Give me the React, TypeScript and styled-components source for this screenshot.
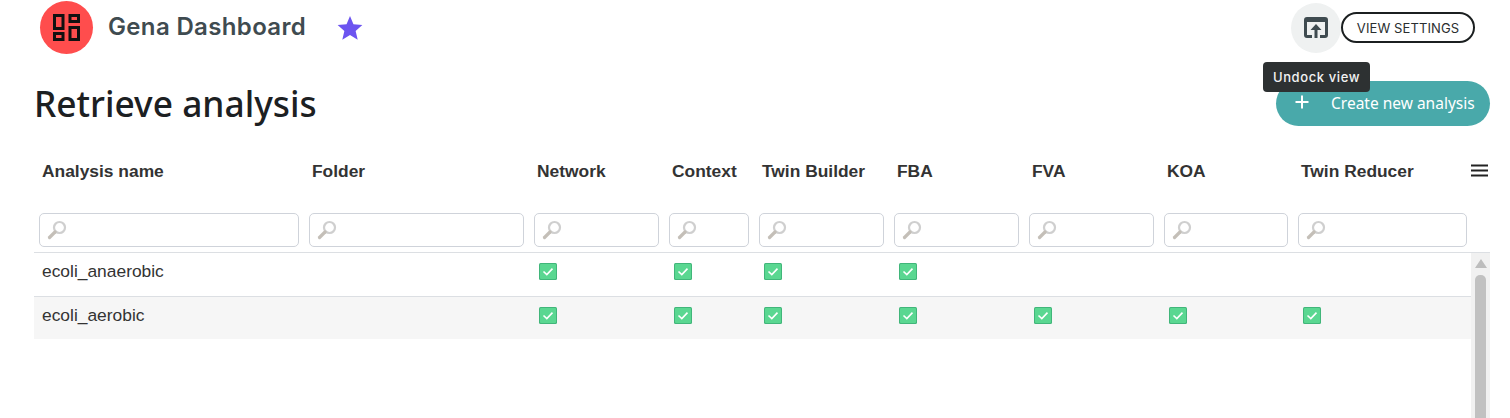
import React from "react";
import styled, { createGlobalStyle } from "styled-components";

const GlobalStyle = createGlobalStyle`
  html, body {
    margin: 0;
    padding: 0;
    height: 418px;
    overflow: hidden;
    background: #ffffff;
  }
`;

const COLUMNS = [
  { name: "Analysis name", width: 270 },
  { name: "Folder", width: 225 },
  { name: "Network", width: 135 },
  { name: "Context", width: 90 },
  { name: "Twin Builder", width: 135 },
  { name: "FBA", width: 135 },
  { name: "FVA", width: 135 },
  { name: "KOA", width: 134 },
  { name: "Twin Reducer", width: 179 },
];

const ROWS = [
  { name: "ecoli_anaerobic", checks: [2, 3, 4, 5] },
  { name: "ecoli_aerobic", checks: [2, 3, 4, 5, 6, 7, 8] },
];

const gridColumns = COLUMNS.map((c) => `${c.width}px`).join(" ");

const Page = styled.div`
  width: 1456px;
  padding-left: 34px;
  font-family: "Liberation Sans", Arial, sans-serif;
`;

const TopBar = styled.header`
  display: flex;
  align-items: center;
  height: 53px;
  padding: 1px 15px 0 6px;
`;

const Logo = styled.div`
  display: flex;
  align-items: center;
  justify-content: center;
  width: 53px;
  height: 53px;
  border-radius: 50%;
  background: #ff4d4d;
`;

const AppTitle = styled.h2`
  margin: -2px 0 0 15px;
  font-family: Inter, sans-serif;
  font-size: 24px;
  font-weight: 600;
  letter-spacing: 0.35px;
  color: #3f4b50;
`;

const Star = styled.svg`
  margin-left: 31px;
  width: 26px;
  height: 26px;
  fill: #6c54f0;
`;

const Actions = styled.div`
  position: relative;
  display: flex;
  align-items: center;
  margin-left: auto;
`;

const UndockButton = styled.button`
  display: flex;
  align-items: center;
  justify-content: center;
  width: 50px;
  height: 50px;
  padding: 0;
  border: none;
  border-radius: 50%;
  background: #eff1f1;
`;

const Tooltip = styled.div`
  position: absolute;
  top: 59px;
  left: -28px;
  z-index: 2;
  display: flex;
  align-items: center;
  justify-content: center;
  width: 107px;
  height: 30px;
  border-radius: 4px;
  background: #2d3132;
  color: #f2f2f2;
  font-family: Inter, sans-serif;
  font-size: 13px;
  font-weight: 500;
  letter-spacing: 0.6px;
  white-space: nowrap;
`;

const SettingsButton = styled.button`
  box-sizing: border-box;
  width: 134px;
  height: 31px;
  padding: 0;
  border: 2px solid #1b1f20;
  border-radius: 16px;
  background: #ffffff;
  color: #2a2e30;
  font-family: Inter, sans-serif;
  font-size: 13px;
  letter-spacing: 0.1px;
`;

const HeadingRow = styled.div`
  display: flex;
  align-items: center;
  justify-content: space-between;
  margin-top: 27px;
`;

const Heading = styled.h1`
  margin: 0;
  font-family: "Noto Sans", sans-serif;
  font-size: 35.3px;
  font-weight: 500;
  line-height: 45px;
  color: #1c2022;
`;

const CreateButton = styled.button`
  display: flex;
  align-items: center;
  box-sizing: border-box;
  width: 214px;
  height: 45px;
  padding: 0 0 2px 18px;
  border: none;
  border-radius: 23px;
  background: #49a9aa;
  color: #ffffff;
  font-family: "Noto Sans", sans-serif;
  font-size: 15.5px;
  font-weight: 400;
`;

const PlusIcon = styled.svg`
  width: 16px;
  height: 16px;
  margin-right: 21px;
  margin-top: -2px;
`;

const HeaderRow = styled.div`
  position: relative;
  display: grid;
  grid-template-columns: ${gridColumns};
  align-items: center;
  height: 42px;
  margin-top: 24px;
`;

const HeaderCell = styled.div`
  padding-left: 8px;
  font-size: 17.4px;
  font-weight: 700;
  color: #333333;
  white-space: nowrap;
`;

const MenuIcon = styled.svg`
  position: absolute;
  top: 14px;
  left: 1437px;
  width: 17px;
  height: 13px;
`;

const FilterRow = styled.div`
  display: grid;
  grid-template-columns: ${gridColumns};
  padding-top: 21px;
  height: 39px;
  border-bottom: 1px solid #dcdfe3;
  width: 1456px;
`;

const FilterCell = styled.div`
  padding: 0 5px;
  min-width: 0;
`;

const FilterBox = styled.div`
  box-sizing: border-box;
  display: flex;
  align-items: center;
  height: 34px;
  padding-left: 7px;
  border: 1px solid #cfd3da;
  border-radius: 5px;
  background: #ffffff;
`;

const Body = styled.div`
  display: flex;
  height: 166px;
`;

const Rows = styled.div`
  width: 1437px;
`;

const Row = styled.div<{ $striped: boolean }>`
  display: grid;
  grid-template-columns: ${gridColumns};
  align-items: center;
  box-sizing: border-box;
  height: ${({ $striped }) => ($striped ? "42px" : "44px")};
  padding-bottom: ${({ $striped }) => ($striped ? "5px" : "6px")};
  background: ${({ $striped }) => ($striped ? "#f6f6f6" : "#ffffff")};
  border-bottom: ${({ $striped }) => ($striped ? "none" : "1px solid #dcdfe3")};
`;

const Cell = styled.div`
  padding-left: 8px;
  font-size: 17.4px;
  color: #333333;
  white-space: nowrap;
`;

const CheckCell = styled(Cell)`
  display: flex;
  padding-left: 10px;
`;

const Scrollbar = styled.div`
  display: flex;
  flex-direction: column;
  align-items: center;
  width: 19px;
  background: #f1f1f1;
`;

const ScrollArrow = styled.div`
  width: 0;
  height: 0;
  margin-top: 6px;
  border-left: 6.5px solid transparent;
  border-right: 6.5px solid transparent;
  border-bottom: 9px solid #bdbdbd;
`;

const ScrollThumb = styled.div`
  flex: 1;
  width: 11px;
  margin-top: 7px;
  border-radius: 5px 5px 0 0;
  background: #c1c1c1;
`;

const SearchIcon = () => (
  <svg width="20" height="20" viewBox="0 0 20 20">
    <circle cx="12.5" cy="7.5" r="5.5" fill="none" stroke="#cfcfcf" strokeWidth="2.2" />
    <path d="M8 12 L2.5 17.5" stroke="#c4bfb8" strokeWidth="3.2" strokeLinecap="round" />
  </svg>
);

const CheckIcon = () => (
  <svg width="18" height="17" viewBox="0 0 18 17">
    <rect x="0" y="0" width="18" height="17" rx="1.5" fill="#41b67a" />
    <rect x="1" y="1" width="16" height="15" rx="1" fill="#5ad791" />
    <path d="M4.5 8.5 L7.8 11.6 L13.5 5.6" fill="none" stroke="#ffffff" strokeWidth="1.6" />
  </svg>
);

const App = () => (
  <Page>
    <GlobalStyle />
    <TopBar>
      <Logo>
        <svg width="27" height="27" viewBox="0 0 27 27" fill="none" stroke="#111111" strokeWidth="3">
          <rect x="1.5" y="1.5" width="8.5" height="13" />
          <rect x="17" y="1.5" width="8.5" height="6" />
          <rect x="1.5" y="19.5" width="8.5" height="6" />
          <rect x="17" y="13.5" width="8.5" height="12" />
        </svg>
      </Logo>
      <AppTitle>Gena Dashboard</AppTitle>
      <Star viewBox="0 0 24 24">
        <path d="M12 1 L15.2 8.6 L23.4 9.3 L17.2 14.7 L19.1 22.8 L12 18.5 L4.9 22.8 L6.8 14.7 L0.6 9.3 L8.8 8.6 Z" />
      </Star>
      <Actions>
        <UndockButton aria-label="Undock view">
          <svg width="24" height="21" viewBox="0 0 24 21" fill="#3f4b50">
            <path d="M3 0h18a3 3 0 0 1 3 3v15a3 3 0 0 1-3 3h-5v-3h5V5H3v13h5v3H3a3 3 0 0 1-3-3V3a3 3 0 0 1 3-3Z" />
            <path d="M12 7 6.5 13H10.5v8h3v-8h4Z" />
          </svg>
        </UndockButton>
        <SettingsButton>VIEW SETTINGS</SettingsButton>
        <Tooltip>Undock view</Tooltip>
      </Actions>
    </TopBar>

    <HeadingRow>
      <Heading>Retrieve analysis</Heading>
      <CreateButton>
        <PlusIcon viewBox="0 0 16 16">
          <path d="M8 1.5v13M1.5 8h13" stroke="#ffffff" strokeWidth="2" />
        </PlusIcon>
        Create new analysis
      </CreateButton>
    </HeadingRow>

    <HeaderRow>
      {COLUMNS.map((column) => (
        <HeaderCell key={column.name}>{column.name}</HeaderCell>
      ))}
      <MenuIcon viewBox="0 0 17 13">
        <path d="M0 1.5h17M0 6.5h17M0 11.5h17" stroke="#222222" strokeWidth="2" />
      </MenuIcon>
    </HeaderRow>

    <FilterRow>
      {COLUMNS.map((column) => (
        <FilterCell key={column.name}>
          <FilterBox>
            <SearchIcon />
          </FilterBox>
        </FilterCell>
      ))}
    </FilterRow>

    <Body>
      <Rows>
        {ROWS.map((row, index) => (
          <Row key={row.name} $striped={index % 2 === 1}>
            {COLUMNS.map((column, columnIndex) =>
              columnIndex === 0 ? (
                <Cell key={column.name}>{row.name}</Cell>
              ) : row.checks.includes(columnIndex) ? (
                <CheckCell key={column.name}>
                  <CheckIcon />
                </CheckCell>
              ) : (
                <Cell key={column.name} />
              ),
            )}
          </Row>
        ))}
      </Rows>
      <Scrollbar>
        <ScrollArrow />
        <ScrollThumb />
      </Scrollbar>
    </Body>
  </Page>
);

export default App;
